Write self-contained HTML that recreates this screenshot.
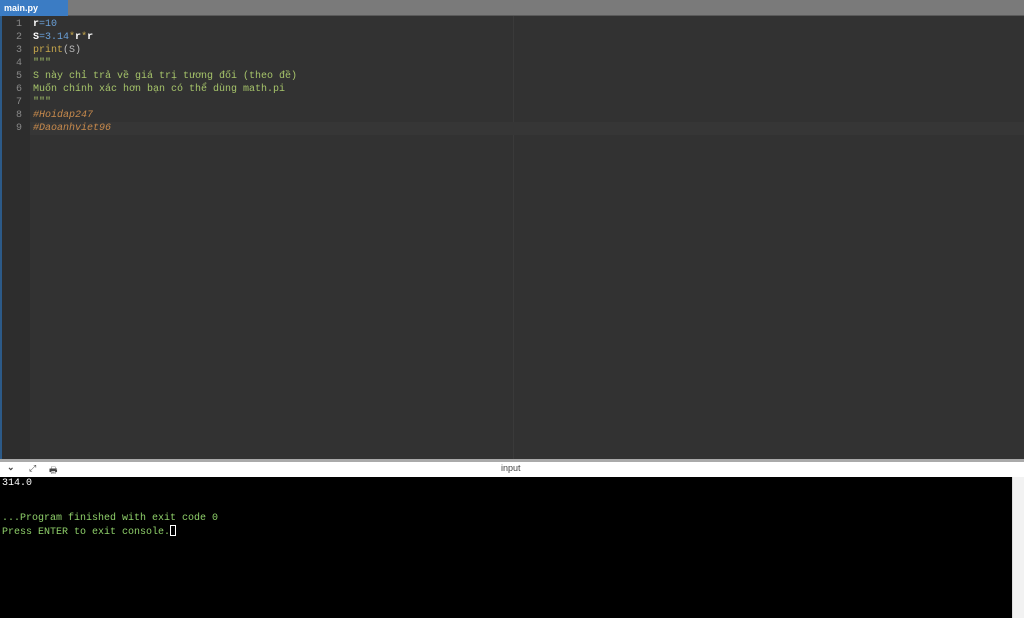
<!DOCTYPE html>
<html><head><meta charset="utf-8"><style>
*{margin:0;padding:0;box-sizing:border-box}
body{width:1024px;height:618px;overflow:hidden;background:#333;position:relative;font-family:"Liberation Mono",monospace}
.tabbar{position:absolute;left:0;top:0;width:1024px;height:16px;background:#7a7a7a;border-bottom:1px solid #5a5a5a}
.tab{position:absolute;left:0;top:0;width:68px;height:16px;background:#3b7cc4;color:#fff;font:bold 9px "Liberation Sans",sans-serif;padding:3px 0 0 4px}
.ed{position:absolute;left:0;top:16px;width:1024px;height:444px;background:#323232}
.gut{position:absolute;left:2px;top:16px;width:28px;height:444px;background:#2d2d2d}
.lb{position:absolute;left:0;top:16px;width:2px;height:444px;background:#2c5a88}
.vl{position:absolute;left:513px;top:16px;width:1px;height:444px;background:#3a3a3a}
.cur{position:absolute;left:30px;top:122px;width:994px;height:13px;background:#363636}
.ln{position:absolute;left:2px;width:20px;text-align:right;color:#888;font-size:10px;line-height:13px}
.code{position:absolute;left:33px;font-size:10px;line-height:13px;white-space:pre;color:#ddd}
.w{color:#fff;font-weight:bold}.n{color:#6aa0d8}.g{color:#a6c46a}.k{color:#c8a84c}.c{color:#c88a4c;font-style:italic}.s{color:#bbb}
.sep{position:absolute;left:0;top:459px;width:1024px;height:3px;background:#aaa}
.tb{position:absolute;left:0;top:462px;width:1024px;height:15px;background:#fff;font:9px "Liberation Sans",sans-serif;color:#444}
.con{position:absolute;left:0;top:477px;width:1012px;height:141px;background:#000;font-size:10px;line-height:11.75px;white-space:pre;padding-left:2px;padding-top:1px}
.sb{position:absolute;left:1012px;top:477px;width:12px;height:141px;background:#f2f2f2;border-left:1px solid #ddd}
</style></head><body>
<div class="tabbar"><div class="tab">main.py</div></div>
<div class="ed"></div><div class="gut"></div><div class="lb"></div><div class="vl"></div><div class="cur"></div>
<div class="ln" style="top:18px">1<br>2<br>3<br>4<br>5<br>6<br>7<br>8<br>9</div>
<div class="code" style="top:18px"><span class="w">r</span><span class="n">=10</span>
<span class="w">S</span><span class="n">=3.14</span><span class="k">*</span><span class="w">r</span><span class="k">*</span><span class="w">r</span>
<span class="k">print</span><span class="s">(S)</span>
<span class="g">"""</span>
<span class="g">S này chỉ trả về giá trị tương đối (theo đề)</span>
<span class="g">Muốn chính xác hơn bạn có thể dùng math.pi</span>
<span class="g">"""</span>
<span class="c">#Hoidap247</span>
<span class="c">#Daoanhviet96</span></div>
<div class="sep"></div>
<div class="tb"><span style="position:absolute;left:7px;top:0;font-weight:bold">⌄</span><span style="position:absolute;left:29px;top:1px">⤢</span><span style="position:absolute;left:49px;top:1px">🖶</span><span style="position:absolute;left:501px;top:1px">input</span></div>
<div class="con"><span style="color:#fff">314.0</span>


<span style="color:#8fd06a">...Program finished with exit code 0
Press ENTER to exit console.</span><span style="display:inline-block;width:6px;height:11px;border:1px solid #fff;vertical-align:-2px"></span></div>
<div class="sb"></div>
</body></html>
